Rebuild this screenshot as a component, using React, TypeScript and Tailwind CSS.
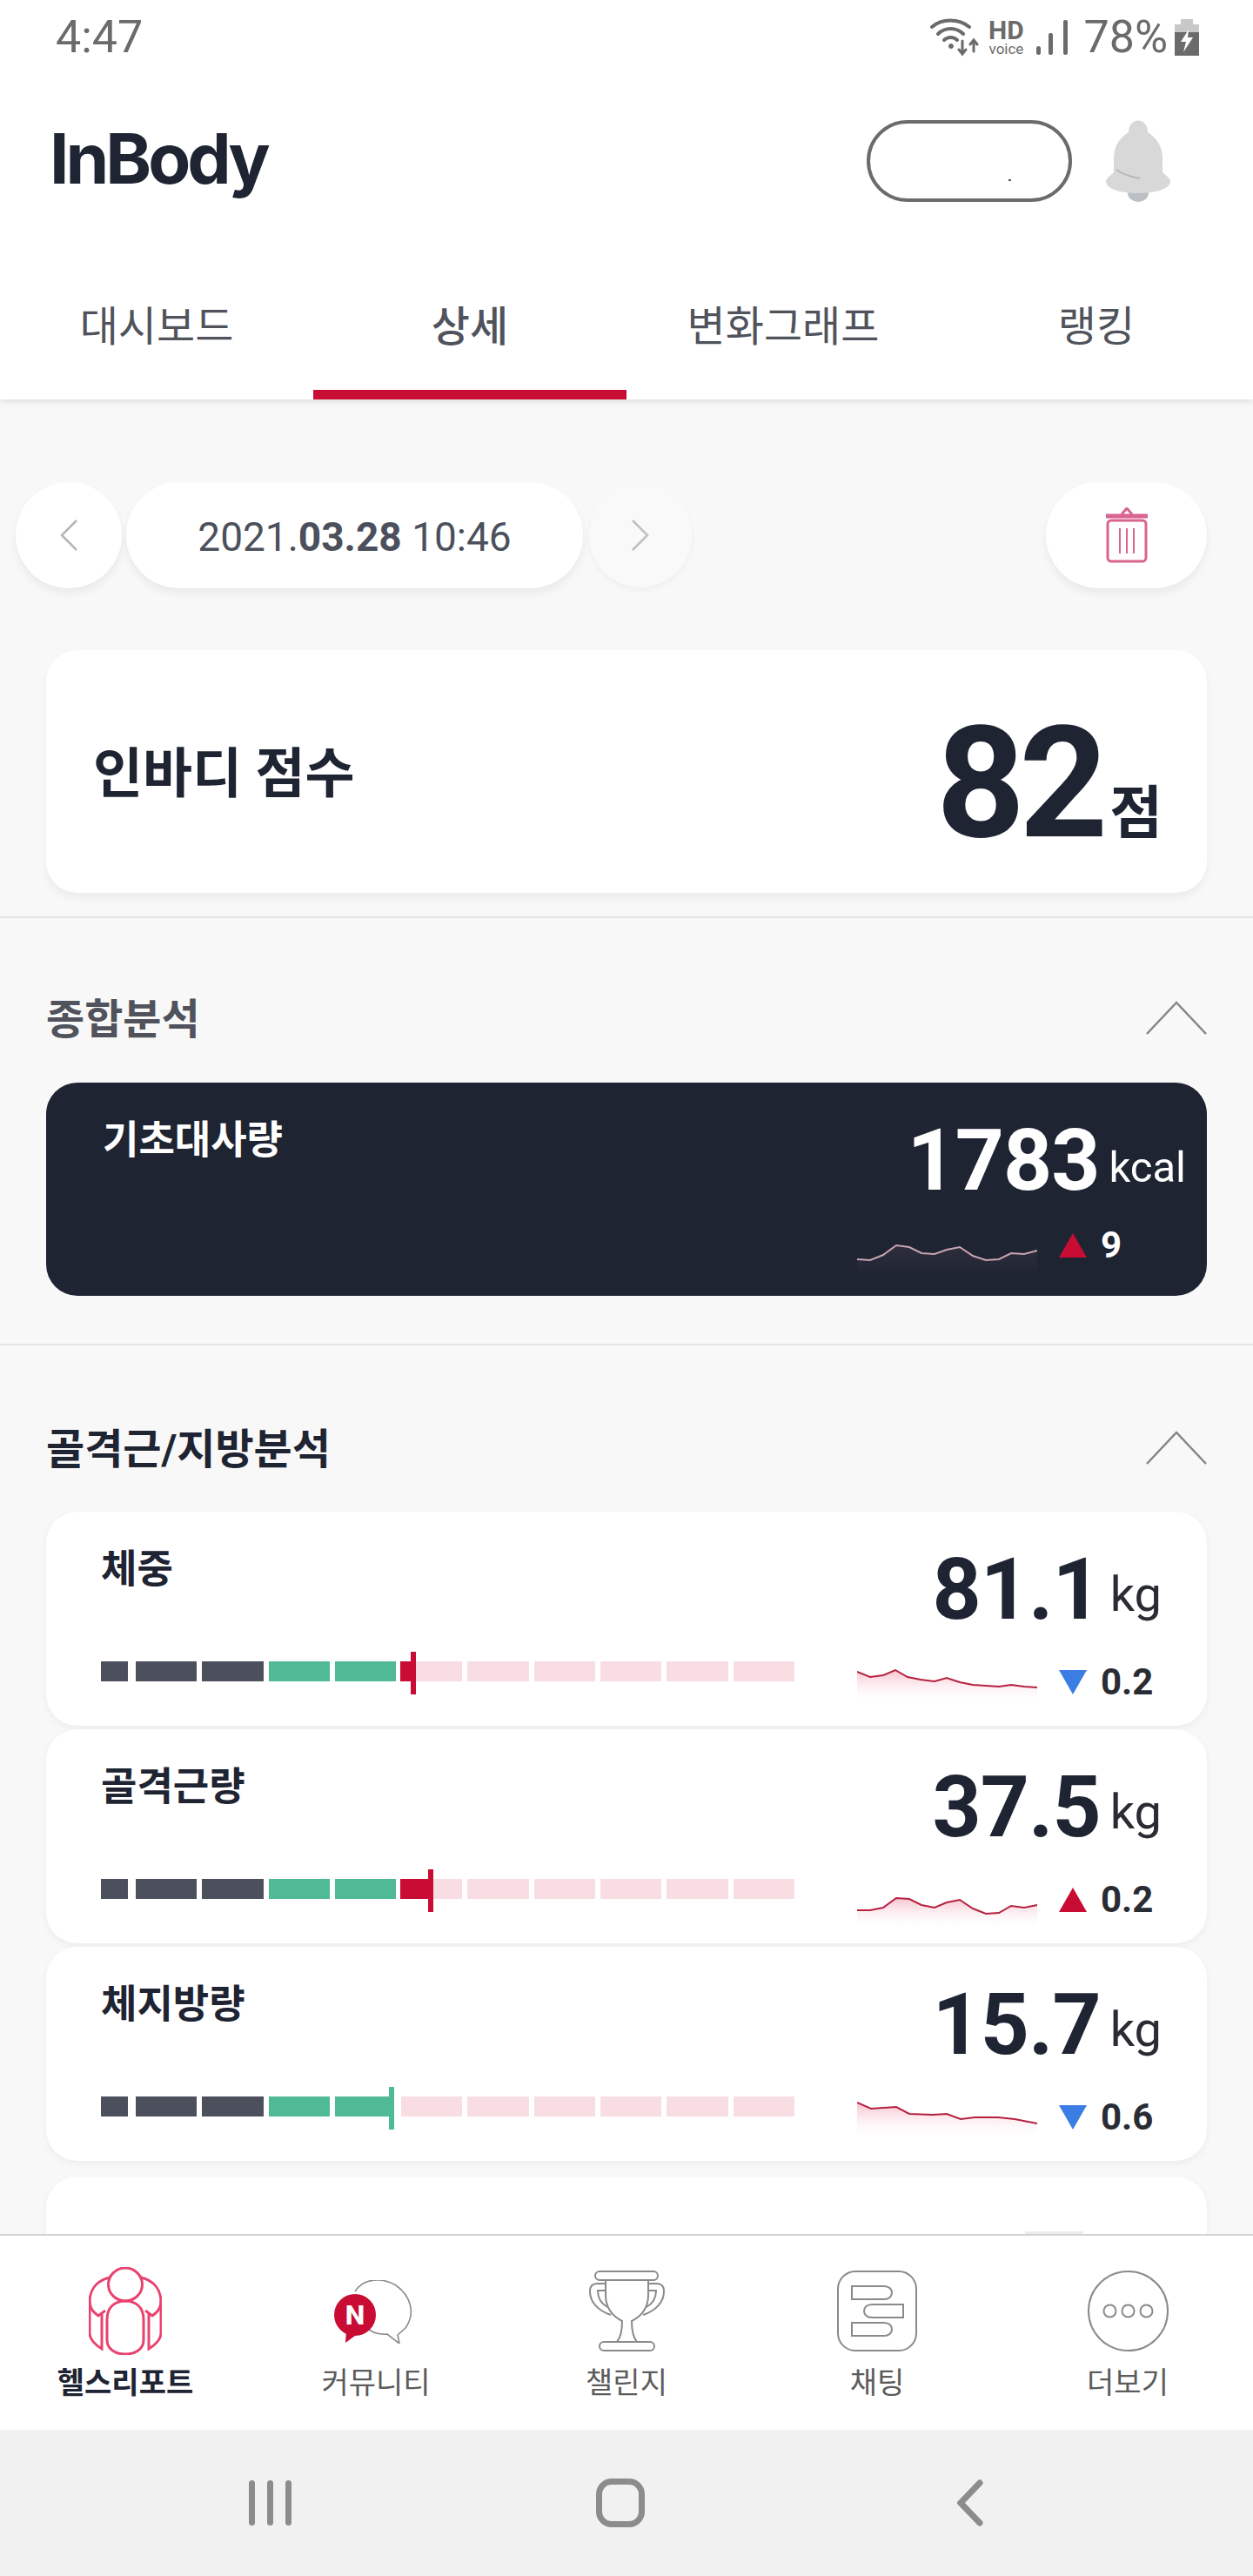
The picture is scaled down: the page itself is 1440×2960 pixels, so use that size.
type Pt = [number, number];

const DARK = "bg-[#4c505c]";
const GREEN = "bg-[#50b996]";
const PINK = "bg-[#f8dde3]";

function StatusBar() {
  return (
    <div className="flex h-[86px] items-center justify-between pl-[64px] pr-[62px] text-[52px] leading-none text-[#6b6b6b]">
      <span>4:47</span>
      <div className="flex items-center">
        <svg width="56" height="44" viewBox="0 0 56 44" fill="none" stroke="#6b6b6b" strokeLinecap="round">
          <path d="M2 10 C13 0 33 0 45 10" strokeWidth="4" />
          <path d="M9 18 C17 10 30 10 38 18" strokeWidth="4" />
          <path d="M16 25 C20 21 27 21 31 25" strokeWidth="4" />
          <circle cx="24" cy="32" r="2.5" fill="#6b6b6b" />
          <path d="M37 26 V40 M33 36 L37 41 L41 36" strokeWidth="3" />
          <path d="M50 38 V26 M46 30 L50 25 L54 30" strokeWidth="3" />
        </svg>
        <div className="ml-[8px] flex w-[46px] flex-col items-center font-bold">
          <span className="text-[30px] leading-[26px]">HD</span>
          <span className="text-[17px] font-normal leading-[16px]">voice</span>
        </div>
        <svg className="ml-[12px]" width="37" height="40" viewBox="0 0 37 40" fill="#6b6b6b">
          <rect x="0" y="30" width="5" height="10" rx="2.5" />
          <rect x="14" y="15" width="5" height="25" rx="2" />
          <rect x="31" y="0" width="5" height="40" rx="2" />
        </svg>
        <span className="ml-[17px]">78%</span>
        <svg className="ml-[8px]" width="28" height="42" viewBox="0 0 28 42">
          <rect x="7" y="0" width="14" height="6" fill="#c8c8c8" />
          <rect x="0" y="6" width="28" height="9" fill="#c8c8c8" />
          <rect x="0" y="15" width="28" height="27" fill="#6b6b6b" />
          <path d="M16 12 L7 26 H13 L10 38 L21 21 H15 Z" fill="#fff" />
        </svg>
      </div>
    </div>
  );
}

function Bell() {
  return (
    <svg width="74" height="94" viewBox="0 0 74 94">
      <ellipse cx="37" cy="84" rx="12" ry="10" fill="#bcc0c4" />
      <path
        d="M26 14 C26 -4 48 -4 48 14 C58 20 65 30 65 44 V60 C71 65 74 68 74 70 C74 80 55 84 37 84 C19 84 0 80 0 70 C0 68 3 65 9 60 V44 C9 30 16 20 26 14 Z"
        fill="#d8d8d8"
      />
      <path d="M12 57 C20 63 28 65 39 67" fill="none" stroke="#b8b8b8" strokeWidth="2" />
    </svg>
  );
}

function Header() {
  const tabs = ["대시보드", "상세", "변화그래프", "랭킹"];
  return (
    <header className="relative z-10 bg-white shadow-[0_2px_8px_rgba(0,0,0,0.12)]">
      <StatusBar />
      <div className="mt-[52px] flex h-[94px] items-center pl-[57px] pr-[95px]">
        <span className="mt-[-6px] font-['Inter',sans-serif] text-[80px] font-bold leading-none tracking-[-4px] text-[#1f2433]">
          InBody
        </span>
        <div className="relative ml-auto h-[94px] w-[236px] rounded-full border-[4px] border-[#6b6b6b]">
          <span className="absolute left-[159px] top-[64px] h-[2px] w-[3px] bg-[#555]" />
        </div>
        <div className="ml-[39px]">
          <Bell />
        </div>
      </div>
      <nav className="mt-[83px] grid grid-cols-4">
        {tabs.map((t, i) => (
          <div
            key={t}
            className={`flex h-[144px] items-center justify-center border-b-[11px] pb-[11px] text-[48px] text-[#50535c] ${
              i === 1 ? "border-[#c80c33] font-medium" : "border-transparent"
            }`}
          >
            {t}
          </div>
        ))}
      </nav>
    </header>
  );
}

function DateRow() {
  return (
    <div className="box-content flex h-[124px] items-center pl-[18px] pr-[53px] pt-[94px]">
      <button className="flex h-[122px] w-[122px] items-center justify-center rounded-full bg-white shadow-[0_6px_10px_rgba(0,0,0,0.06)]">
        <svg width="22" height="36" viewBox="0 0 22 36" fill="none" stroke="#b5b5b5" strokeWidth="2.5">
          <path d="M20 1 L3 18 L20 35" />
        </svg>
      </button>
      <div className="ml-[5px] flex h-[122px] w-[525px] items-center justify-center rounded-full bg-white pt-[4px] text-[46px] text-[#4c505c] shadow-[0_6px_10px_rgba(0,0,0,0.06)]">
        <span>
          2021.<b>03.28</b> 10:46
        </span>
      </div>
      <button className="ml-[7px] flex h-[120px] w-[118px] items-center justify-center rounded-full bg-[#f9f9f9] shadow-[0_3px_6px_rgba(0,0,0,0.04)]">
        <svg width="22" height="36" viewBox="0 0 22 36" fill="none" stroke="#c0c0c0" strokeWidth="2.5">
          <path d="M2 1 L19 18 L2 35" />
        </svg>
      </button>
      <button className="ml-auto flex h-[122px] w-[185px] items-center justify-center rounded-full bg-white shadow-[0_6px_10px_rgba(0,0,0,0.06)]">
        <svg width="48" height="64" viewBox="0 0 48 64" fill="none" stroke="#d9648f" strokeWidth="3">
          <path d="M0 10 H48" strokeWidth="5" />
          <path d="M18 8 L24 1 L30 8" />
          <rect x="2" y="15" width="44" height="47" rx="4" />
          <path d="M16 24 V53 M24 24 V53 M32 24 V53" strokeWidth="2" />
        </svg>
      </button>
    </div>
  );
}

function ScoreCard() {
  return (
    <div className="mx-[53px] mt-[70px] flex h-[279px] items-center justify-between rounded-[36px] bg-white pl-[54px] pr-[51px] shadow-[0_6px_10px_rgba(0,0,0,0.05)]">
      <span className="mt-[7px] text-[62px] font-bold leading-none text-[#1f2433]">인바디 점수</span>
      <div className="mt-[26px] flex items-end">
        <span className="text-[178px] font-bold leading-[176px] tracking-[-7px] text-[#1f2433]">82</span>
        <span className="mb-[20px] ml-[9px] text-[66px] font-bold leading-none text-[#1f2433]">점</span>
      </div>
    </div>
  );
}

function SectionHead({ title, dark }: { title: string; dark?: boolean }) {
  return (
    <div className={`mx-[53px] flex h-[60px] items-center justify-between ${dark ? "mt-[88px]" : "mt-[85px]"}`}>
      <span className={`mt-[3px] text-[48px] font-bold leading-none ${dark ? "text-[#1f2433]" : "text-[#50535c]"}`}>{title}</span>
      <svg width="70" height="40" viewBox="0 0 70 40" fill="none" stroke="#858585" strokeWidth="2.5">
        <path d="M1 38 L35 2 L69 38" />
      </svg>
    </div>
  );
}

function Spark({ id, pts, dy, dark }: { id: string; pts: Pt[]; dy: number; dark?: boolean }) {
  const line = pts.map(([x, y]) => `${x},${y + dy}`).join(" ");
  const bottom = Math.max(...pts.map((p) => p[1])) + dy + 18;
  return (
    <svg width="207" height="60" viewBox="0 0 207 60" className="shrink-0">
      <defs>
        <linearGradient id={id} x1="0" y1="0" x2="0" y2="1">
          <stop offset="0" stopColor={dark ? "#c9a3b0" : "#f3a9bb"} stopOpacity={dark ? 0.08 : 0.7} />
          <stop offset="1" stopColor={dark ? "#c9a3b0" : "#ffffff"} stopOpacity="0" />
        </linearGradient>
      </defs>
      <polygon points={`0,${bottom} ${line} 207,${bottom}`} fill={`url(#${id})`} />
      <polyline points={line} fill="none" stroke={dark ? "#c9a3b0" : "#b5213f"} strokeWidth="2" />
    </svg>
  );
}

function Delta({ up, value, dark }: { up: boolean; value: string; dark?: boolean }) {
  return (
    <div className="ml-[25px] mt-[10px] flex items-center">
      <svg width="32" height="28" viewBox="0 0 32 28">
        <polygon points={up ? "16,0 32,28 0,28" : "0,0 32,0 16,28"} fill={up ? "#c80c33" : "#3b7de3"} />
      </svg>
      <span className={`ml-[16px] text-[42px] font-bold leading-[28px] ${dark ? "text-white" : "text-[#2a2c33]"}`}>{value}</span>
    </div>
  );
}

function Bar({ fill, marker }: { fill: "red" | "green"; marker: number }) {
  // marker: left edge of the needle, measured from the start of the bar
  const segs = [DARK, DARK, GREEN, GREEN, PINK, PINK, PINK, PINK, PINK, PINK];
  const isGreen = fill === "green";
  return (
    <div className="relative mt-[83px] flex h-[23px] w-[797px]">
      <div className={`h-full w-[31px] ${DARK}`} />
      <div className="ml-[9px] flex flex-1 gap-[6px]">
        {segs.map((c, i) => (
          <div key={i} className="h-full flex-1">
            <div className={`h-full ${c} ${isGreen && i === 3 ? "w-[65px]" : "w-full"}`} />
          </div>
        ))}
      </div>
      {!isGreen && (
        <div className="absolute left-[344px] top-0 h-full bg-[#c80c33]" style={{ width: marker - 344 }} />
      )}
      <div
        className={`absolute top-[-11px] h-[49px] w-[6px] ${isGreen ? "bg-[#50b996]" : "bg-[#c80c33]"}`}
        style={{ left: marker }}
      />
    </div>
  );
}

type Metric = {
  id: string;
  label: string;
  value: string;
  up: boolean;
  delta: string;
  dy: number;
  pts: Pt[];
  fill: "red" | "green";
  marker: number;
};

const metrics: Metric[] = [
  {
    id: "weight",
    label: "체중",
    value: "81.1",
    up: false,
    delta: "0.2",
    dy: 10,
    pts: [[0, 2], [15, 8], [30, 6], [44, 0], [58, 8], [73, 11], [89, 13], [103, 9], [118, 14], [133, 17], [148, 18], [163, 19], [177, 17], [192, 19], [207, 20]],
    fill: "red",
    marker: 356,
  },
  {
    id: "muscle",
    label: "골격근량",
    value: "37.5",
    up: true,
    delta: "0.2",
    dy: 22,
    pts: [[0, 14], [15, 14], [30, 11], [45, 0], [60, 1], [74, 8], [89, 11], [103, 5], [118, 2], [133, 12], [148, 18], [163, 17], [177, 9], [192, 11], [207, 8]],
    fill: "red",
    marker: 376,
  },
  {
    id: "fat",
    label: "체지방량",
    value: "15.7",
    up: false,
    delta: "0.6",
    dy: 7,
    pts: [[0, 0], [16, 7], [45, 5], [60, 13], [87, 14], [103, 13], [119, 19], [135, 17], [149, 17], [162, 17], [181, 19], [207, 24]],
    fill: "green",
    marker: 331,
  },
];

function MetricCard({ m }: { m: Metric }) {
  return (
    <div className="flex h-[246px] rounded-[36px] bg-white pl-[63px] pr-[52px] shadow-[0_3px_8px_rgba(0,0,0,0.05)]">
      <div className="w-[869px] pt-[45px]">
        <div className="h-[44px] text-[45px] font-bold leading-[44px] text-[#1f2433]">{m.label}</div>
        <Bar fill={m.fill} marker={m.marker} />
      </div>
      <div className="w-[350px] pt-[40px]">
        <div className="flex h-[100px] items-center justify-end">
          <span className="text-[98px] font-bold leading-[100px] tracking-[-1px] text-[#1f2433]">{m.value}</span>
          <span className="ml-[11px] mt-[10px] text-[56px] leading-none text-[#2a2c33]">kg</span>
        </div>
        <div className="mt-[32px] flex items-start">
          <Spark id={m.id} pts={m.pts} dy={m.dy} />
          <Delta up={m.up} value={m.delta} />
        </div>
      </div>
    </div>
  );
}

const bmrPts: Pt[] = [[0, 16], [15, 17], [30, 11], [45, 0], [60, 2], [74, 9], [89, 10], [103, 5], [118, 2], [133, 12], [148, 17], [163, 16], [177, 9], [192, 10], [207, 6]];

function BmrCard() {
  return (
    <div className="mx-[53px] mt-[44px] flex h-[245px] rounded-[36px] bg-[#1f2433] pl-[65px] pr-[24px]">
      <div className="w-[867px] pt-[45px] text-[45px] font-bold leading-[44px] text-white">기초대사량</div>
      <div className="w-[378px] pt-[40px]">
        <div className="flex h-[100px] items-center justify-end text-white">
          <span className="text-[98px] font-bold leading-[100px] tracking-[-1px]">1783</span>
          <span className="ml-[11px] mt-[14px] text-[49px] leading-none">kcal</span>
        </div>
        <div className="mt-[23px] flex items-start">
          <Spark id="bmr" pts={bmrPts} dy={24} dark />
          <Delta up value="9" dark />
        </div>
      </div>
    </div>
  );
}

function Main() {
  return (
    <main className="min-h-0 flex-1 overflow-hidden bg-[#f8f8f8]">
      <DateRow />
      <ScoreCard />
      <div className="mt-[27px] h-[2px] bg-[#e4e4e4]" />
      <SectionHead title="종합분석" />
      <BmrCard />
      <div className="mt-[55px] h-[2px] bg-[#e4e4e4]" />
      <SectionHead title="골격근/지방분석" dark />
      <div className="mx-[53px] mt-[43px] flex flex-col gap-[4px]">
        {metrics.map((m) => (
          <MetricCard key={m.id} m={m} />
        ))}
      </div>
      <div className="mx-[53px] mt-[18px] h-[120px] rounded-[36px] bg-white pl-[1125px] pt-[63px] shadow-[0_3px_8px_rgba(0,0,0,0.05)]">
        <div className="h-[10px] w-[67px] bg-[#ececec]" />
      </div>
    </main>
  );
}

const GRAY = "#8a8a8a";

function HealthIcon() {
  return (
    <svg width="84" height="101" viewBox="0 0 84 101" fill="none" stroke="#e8436f" strokeWidth="3">
      <ellipse cx="42" cy="20" rx="19.5" ry="19" />
      <path d="M21 60 C21 46 30 39 42 39 C54 39 63 46 63 60 V84 C63 94 54 100 42 100 C30 100 21 94 21 84 Z" />
      <path d="M24 12 C8 16 1 27 1 40 C1 46 5 52 11 56 L19 50" />
      <path d="M60 12 C76 16 83 27 83 40 C83 46 79 52 73 56 L65 50" />
      <path d="M1 38 V76 C1 83 8 90 15 94 V54" />
      <path d="M83 38 V76 C83 83 76 90 69 94 V54" />
    </svg>
  );
}

function CommunityIcon() {
  return (
    <svg width="90" height="73" viewBox="0 0 90 73" fill="none" className="ml-[-6px]">
      <path
        d="M24 13 C34 -3 56 -3 71 6 C88 18 94 38 82 55 L73 63 L75 73 L61 62 C50 63 42 60 36 53"
        stroke={GRAY}
        strokeWidth="1.6"
      />
      <circle cx="24" cy="40" r="24" fill="#c80c33" />
      <path d="M14 58 L13 72 L28 61 Z" fill="#c80c33" />
      <text x="24" y="51" textAnchor="middle" fontSize="32" fontWeight="800" fill="#fff">
        N
      </text>
    </svg>
  );
}

function TrophyIcon() {
  return (
    <svg width="87" height="93" viewBox="0 0 87 93" fill="none" stroke={GRAY} strokeWidth="2">
      <rect x="7" y="1" width="72" height="10" rx="5" />
      <rect x="12" y="82" width="63" height="10" rx="5" />
      <path d="M19 11 V28 C19 44 28 53 38 58 C38 68 37 76 32 82 M68 11 V28 C68 44 59 53 49 58 C49 68 50 76 55 82" />
      <path d="M19 15 H9 C3 15 1 19 1 24 C1 36 10 46 25 51" />
      <path d="M68 15 H78 C84 15 86 19 86 24 C86 36 77 46 62 51" />
      <path d="M19 23 H10 C10 31 14 38 21 42 M68 23 H77 C77 31 73 38 66 42" />
    </svg>
  );
}

function ChatIcon() {
  return (
    <svg width="92" height="93" viewBox="0 0 92 93" fill="none" stroke={GRAY} strokeWidth="2">
      <rect x="1" y="1" width="90" height="91" rx="20" />
      <path d="M17 18 H54 C66 18 66 33 54 33 H17 Z" />
      <path d="M76 39 H40 C28 39 28 54 40 54 H76 Z" />
      <path d="M17 60 H54 C66 60 66 75 54 75 H17 Z" />
    </svg>
  );
}

function MoreIcon() {
  return (
    <svg width="93" height="93" viewBox="0 0 93 93" fill="none" stroke={GRAY} strokeWidth="2">
      <circle cx="46.5" cy="46.5" r="45.5" />
      <circle cx="25.5" cy="46.5" r="7" />
      <circle cx="46.5" cy="46.5" r="7" />
      <circle cx="67.5" cy="46.5" r="7" />
    </svg>
  );
}

function BottomNav() {
  const items = [
    { label: "헬스리포트", icon: <HealthIcon />, active: true, pad: "pb-[3px]" },
    { label: "커뮤니티", icon: <CommunityIcon />, pad: "pb-[16px]" },
    { label: "챌린지", icon: <TrophyIcon />, pad: "pb-[7px]" },
    { label: "채팅", icon: <ChatIcon />, pad: "pb-[7px]" },
    { label: "더보기", icon: <MoreIcon />, pad: "pb-[7px]" },
  ];
  return (
    <nav className="relative z-10 grid h-[225px] shrink-0 grid-cols-5 border-t-2 border-[#d4d4d4] bg-white">
      {items.map((it) => (
        <div key={it.label} className="flex flex-col items-center">
          <div className={`flex h-[140px] items-end ${it.pad}`}>{it.icon}</div>
          <span className={`mt-[9px] text-[34px] leading-[40px] ${it.active ? "font-bold text-[#1f2433]" : "text-[#5c5c5c]"}`}>
            {it.label}
          </span>
        </div>
      ))}
    </nav>
  );
}

function SystemBar() {
  return (
    <div className="flex h-[168px] shrink-0 items-center bg-[#f1f1f1] pl-[286px]">
      <div className="flex gap-[14px]">
        <div className="h-[52px] w-[7px] rounded-full bg-[#8c8c8c]" />
        <div className="h-[52px] w-[7px] rounded-full bg-[#8c8c8c]" />
        <div className="h-[52px] w-[7px] rounded-full bg-[#8c8c8c]" />
      </div>
      <div className="ml-[350px] h-[56px] w-[56px] rounded-[18px] border-[7px] border-[#8c8c8c]" />
      <svg className="ml-[359px]" width="30" height="54" viewBox="0 0 30 54" fill="none" stroke="#8c8c8c" strokeWidth="7" strokeLinecap="round">
        <path d="M26 4 L4 27 L26 50" />
      </svg>
    </div>
  );
}

export default function App() {
  return (
    <div className="flex h-[2960px] w-[1440px] flex-col overflow-hidden bg-white font-[Roboto,'Noto_Sans_CJK_KR',sans-serif]">
      <Header />
      <Main />
      <BottomNav />
      <SystemBar />
    </div>
  );
}
